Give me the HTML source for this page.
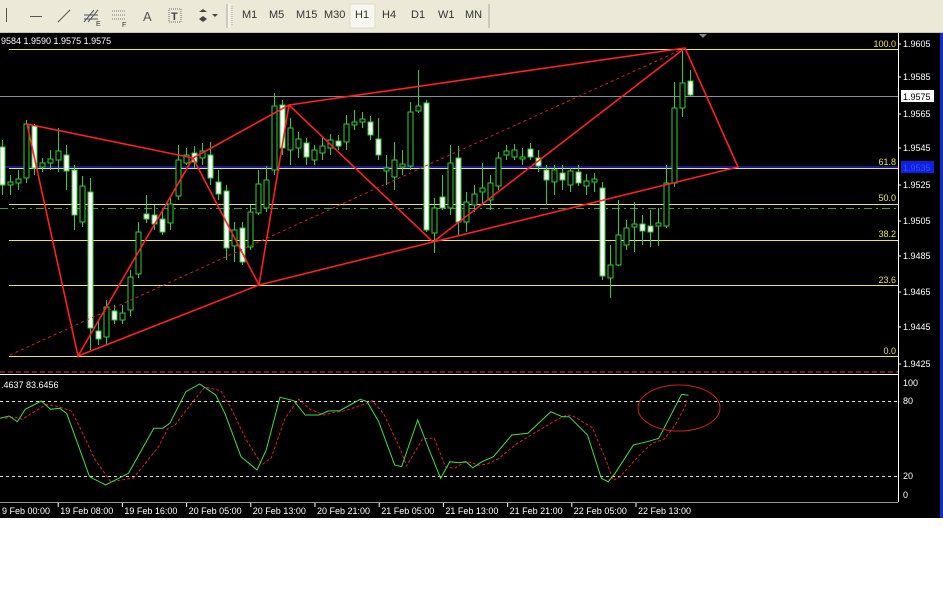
<!DOCTYPE html>
<html><head><meta charset="utf-8"><style>
html,body{margin:0;padding:0;background:#fff;width:943px;height:606px;overflow:hidden;font-family:"Liberation Sans",sans-serif}
#tb{position:absolute;left:0;top:0;width:943px;height:32px;background:#ece9d8;border-bottom:1px solid #c8c4b0}
.b{position:absolute;top:9px;font-size:11px;color:#333}
svg{position:absolute;left:0;top:0}
</style></head><body>
<div id="tb">
<div style="position:absolute;left:6px;top:8px;width:1px;height:14px;background:#555"></div>
<div style="position:absolute;left:30px;top:16px;width:12px;height:1px;background:#555"></div>
<svg width="943" height="32" style="position:absolute;left:0;top:0">
<line x1="58" y1="22" x2="70" y2="10" stroke="#555"/>
<g stroke="#555" fill="none"><path d="M84 22 L94 10 M88 22 L98 10 M84 15 L98 15 M84 19 L98 19"/></g>
<text x="96" y="26" font-size="7" fill="#333" font-family="Liberation Sans">E</text>
<g stroke="#777" stroke-dasharray="1,1"><line x1="112" y1="11" x2="126" y2="11"/><line x1="112" y1="15" x2="126" y2="15"/><line x1="112" y1="19" x2="126" y2="19"/></g>
<text x="122" y="27" font-size="7" fill="#333" font-family="Liberation Sans">F</text>
<text x="143" y="21" font-size="13" fill="#555" font-family="Liberation Sans">A</text>
<rect x="169" y="9" width="12" height="13" fill="none" stroke="#666" stroke-dasharray="1,1"/>
<text x="171" y="20" font-size="11" fill="#444" font-family="Liberation Sans" font-weight="bold">T</text>
<path d="M199 12 l4 -3 l4 3 z M203 16 l4 3 l-4 3 l-4 -3z M212 14 h6 l-3 3z" fill="#444"/>
<line x1="227" y1="4" x2="227" y2="28" stroke="#aaa"/><line x1="229" y1="4" x2="229" y2="28" stroke="#fff"/>
<line x1="232" y1="6" x2="232" y2="26" stroke="#aaa" stroke-dasharray="1,1"/>
<rect x="350" y="4" width="25" height="24" fill="#f7f6ef" stroke="#dcd9c8"/>
<line x1="489" y1="4" x2="489" y2="28" stroke="#aaa"/>
</svg>
<span class="b" style="left:242px">M1</span><span class="b" style="left:269px">M5</span><span class="b" style="left:296px">M15</span><span class="b" style="left:324px">M30</span><span class="b" style="left:355px">H1</span><span class="b" style="left:382px">H4</span><span class="b" style="left:411px">D1</span><span class="b" style="left:438px">W1</span><span class="b" style="left:465px">MN</span>
</div>
<svg id="c" width="943" height="606" style="top:0" font-family="Liberation Sans" font-size="9">
<rect x="0" y="33" width="940" height="485" fill="#000"/>
<rect x="940" y="33" width="3" height="485" fill="#1030c0"/>
<path d="M699 34 h8 l-4 4z" fill="#888"/>
<text x="1" y="44" fill="#fff">9584 1.9590 1.9575 1.9575</text>
<g stroke="#e8e84a" stroke-width="1">
<line x1="9" y1="49.5" x2="898" y2="49.5"/><line x1="9" y1="168.5" x2="898" y2="168.5"/><line x1="9" y1="204.5" x2="898" y2="204.5"/><line x1="9" y1="240.5" x2="898" y2="240.5"/><line x1="9" y1="285.5" x2="898" y2="285.5"/><line x1="9" y1="356.5" x2="898" y2="356.5"/>
</g>
<line x1="0" y1="96.5" x2="898" y2="96.5" stroke="#8a8a9a"/>
<line x1="0" y1="167" x2="898" y2="167" stroke="#2020d0" stroke-width="1.5"/>
<line x1="0" y1="208.5" x2="898" y2="208.5" stroke="#40a040" stroke-dasharray="8,4,2,4"/>
<line x1="0" y1="372" x2="898" y2="372" stroke="#e03050" stroke-dasharray="5,3"/>
<g id="cd"></g>
<g stroke="#ff2020" stroke-width="1.6" fill="none">
<path d="M27 124 L78 356 L193 158 L27 124 M193 158 L259 285 L78 356 M259 285 L289 105 L193 158 M289 105 L685 48 L738 167 L433 242 L259 285 M289 105 L433 242 L685 48"/>
</g>
<line x1="10" y1="355" x2="685" y2="48" stroke="#d02020" stroke-dasharray="3,3"/>
<g fill="#e8e84a" text-anchor="end">
<text x="896" y="47">100.0</text><text x="896" y="165">61.8</text><text x="896" y="201">50.0</text><text x="896" y="237">38.2</text><text x="896" y="283">23.6</text><text x="896" y="354">0.0</text>
</g>
<line x1="898.5" y1="33" x2="898.5" y2="502" stroke="#fff"/>
<line x1="0" y1="374.5" x2="898" y2="374.5" stroke="#fff"/>
<line x1="0" y1="502.5" x2="898" y2="502.5" stroke="#fff" stroke-opacity="0.6"/>
<g fill="#fff" id="pa"></g>
<rect x="901" y="90" width="33" height="12" fill="#fff"/><text x="903" y="100" fill="#000">1.9575</text>
<rect x="901" y="161" width="33" height="12" fill="#1020e0"/><text x="903" y="171" fill="#3050ff">1.9535</text>
<g stroke="#ddd" stroke-dasharray="3,3"><line x1="0" y1="401.5" x2="898" y2="401.5"/><line x1="0" y1="476.5" x2="898" y2="476.5"/></g>
<g fill="#fff"><text x="903" y="386">100</text><text x="903" y="404">80</text><text x="903" y="479">20</text><text x="903" y="498">0</text></g>
<text x="1" y="388" fill="#fff">.4637 83.6456</text>
<polyline id="rd" fill="none" stroke="#e02020" stroke-dasharray="3,2"/>
<polyline id="gr" fill="none" stroke="#40e040"/>
<ellipse cx="679" cy="408" rx="41" ry="23" fill="none" stroke="#d02020"/>
<g fill="#fff" id="ta"></g>
</svg>
<script>
var ns="http://www.w3.org/2000/svg",cd=document.getElementById('cd');
function el(t,a,p){var e=document.createElementNS(ns,t);for(var k in a)e.setAttribute(k,a[k]);p.appendChild(e);return e;}
// x, bodyTop, bodyBot, wickTop, wickBot, white(bear)
var C=[[2,147,185,140,195,1],[10,182,185,175,195,0],[18,179,183,170,190,0],[26,124,178,120,183,0],[34,126,168,124,175,1],[42,163,167,158,172,0],[50,159,163,150,170,0],[58,151,160,128,172,0],[66,155,171,145,190,1],[74,170,215,165,230,1],[82,186,222,176,227,0],[90,192,328,178,350,1],[98,331,339,320,345,1],[106,307,337,300,345,0],[114,311,320,305,324,1],[122,313,320,305,324,0],[130,277,310,270,316,0],[138,232,274,222,278,0],[146,214,219,195,223,1],[154,215,224,205,230,1],[162,219,232,210,235,1],[170,204,223,198,230,0],[178,160,196,145,200,0],[186,155,163,148,165,0],[194,153,162,146,168,1],[202,151,158,143,165,0],[210,155,178,142,185,1],[218,182,194,170,200,1],[226,191,248,185,260,1],[234,230,246,222,262,0],[242,228,262,222,265,1],[250,212,247,205,250,0],[258,184,213,170,215,0],[266,180,208,166,212,0],[274,106,170,93,175,0],[282,105,148,100,155,1],[290,128,150,118,165,0],[298,139,148,132,158,0],[306,143,157,138,165,1],[314,150,160,145,165,0],[322,146,153,138,160,0],[330,140,148,134,155,0],[338,141,146,135,150,1],[346,124,142,115,150,0],[354,122,125,110,130,0],[362,119,122,112,128,0],[370,122,135,116,140,1],[378,139,155,118,160,1],[386,168,171,155,185,0],[394,160,177,142,190,0],[402,164,167,150,175,0],[410,112,166,102,170,0],[418,106,111,70,113,0],[426,103,230,100,232,1],[434,208,233,198,253,0],[442,197,208,175,210,1],[450,163,208,145,215,0],[458,158,222,146,235,1],[466,202,222,192,232,0],[474,194,205,185,212,0],[482,188,192,163,205,0],[490,183,200,175,210,0],[498,158,186,152,190,0],[506,151,155,145,160,0],[514,150,157,144,160,0],[522,157,159,148,165,0],[530,149,157,143,160,1],[538,158,166,150,172,1],[546,170,180,165,205,1],[554,170,182,165,195,0],[562,173,180,165,190,1],[570,171,185,168,192,0],[578,172,183,165,186,1],[586,181,186,174,195,0],[594,179,182,173,192,0],[602,188,276,182,280,1],[610,265,278,245,298,0],[618,235,265,200,266,0],[626,228,245,220,250,0],[634,224,227,202,252,0],[642,224,231,215,245,1],[650,226,232,210,247,1],[658,223,226,208,246,0],[666,183,226,165,228,0],[674,108,183,82,187,0],[682,83,108,50,117,0],[690,81,95,70,96,1]];
C.forEach(function(c){var x=c[0]+0.5;
el('line',{x1:x,y1:c[3],x2:x,y2:c[4],stroke:'#30d030'},cd);
el('rect',{x:x-2.5,y:c[1],width:5,height:Math.max(1,c[2]-c[1]),fill:c[5]?'#fff':'#000',stroke:'#30d030'},cd);});
var pa=document.getElementById('pa');
[[1.9605,44],[1.9585,77],[1.9565,114],[1.9545,148],[1.9525,185],[1.9505,221],[1.9485,256],[1.9465,292],[1.9445,327],[1.9425,364]].forEach(function(p){el('text',{x:903,y:p[1]+3},pa).textContent=p[0].toFixed(4);el('line',{x1:898,y1:p[1],x2:901,y2:p[1],stroke:'#fff'},pa);});
var G=[0,145,20,138,38,155,55,118,90,93,110,118,130,115,145,130,160,185,195,320,230,345,280,310,335,175,355,175,370,160,405,65,435,42,470,75,490,130,525,260,560,300,580,240,610,82,640,92,665,135,695,135,715,123,740,122,785,88,800,95,825,155,860,285,875,290,910,150,935,240,960,325,980,275,1000,278,1015,275,1030,293,1050,275,1075,260,1115,195,1150,190,1200,125,1225,140,1240,140,1280,195,1310,325,1325,335,1340,310,1380,225,1410,215,1435,205,1460,140,1485,73,1500,76];
var g=[],r=[];for(var i=0;i<G.length;i+=2){var x=G[i]*0.459,y=370+G[i+1]/3;g.push(x.toFixed(1)+','+y.toFixed(1));
var y2=i>0?370+(G[i+1]*0.6+G[i-1]*0.4)/3:y;r.push((x+5).toFixed(1)+','+y2.toFixed(1));}
r[r.length-1]=(1495*0.459).toFixed(1)+','+(370+90/3);
document.getElementById('gr').setAttribute('points',g.join(' '));
document.getElementById('rd').setAttribute('points',r.slice(0,-1).join(' ')+' '+r[r.length-1]);
var ta=document.getElementById('ta');
['9 Feb 00:00','19 Feb 08:00','19 Feb 16:00','20 Feb 05:00','20 Feb 13:00','20 Feb 21:00','21 Feb 05:00','21 Feb 13:00','21 Feb 21:00','22 Feb 05:00','22 Feb 13:00'].forEach(function(t,i){var x=i==0?-2:i*64.2-8;
if(i>0)el('line',{x1:x+2,y1:503,x2:x+2,y2:507,stroke:'#fff'},ta);
el('text',{x:x+4,y:514},ta).textContent=t;});
</script>
</body></html>
